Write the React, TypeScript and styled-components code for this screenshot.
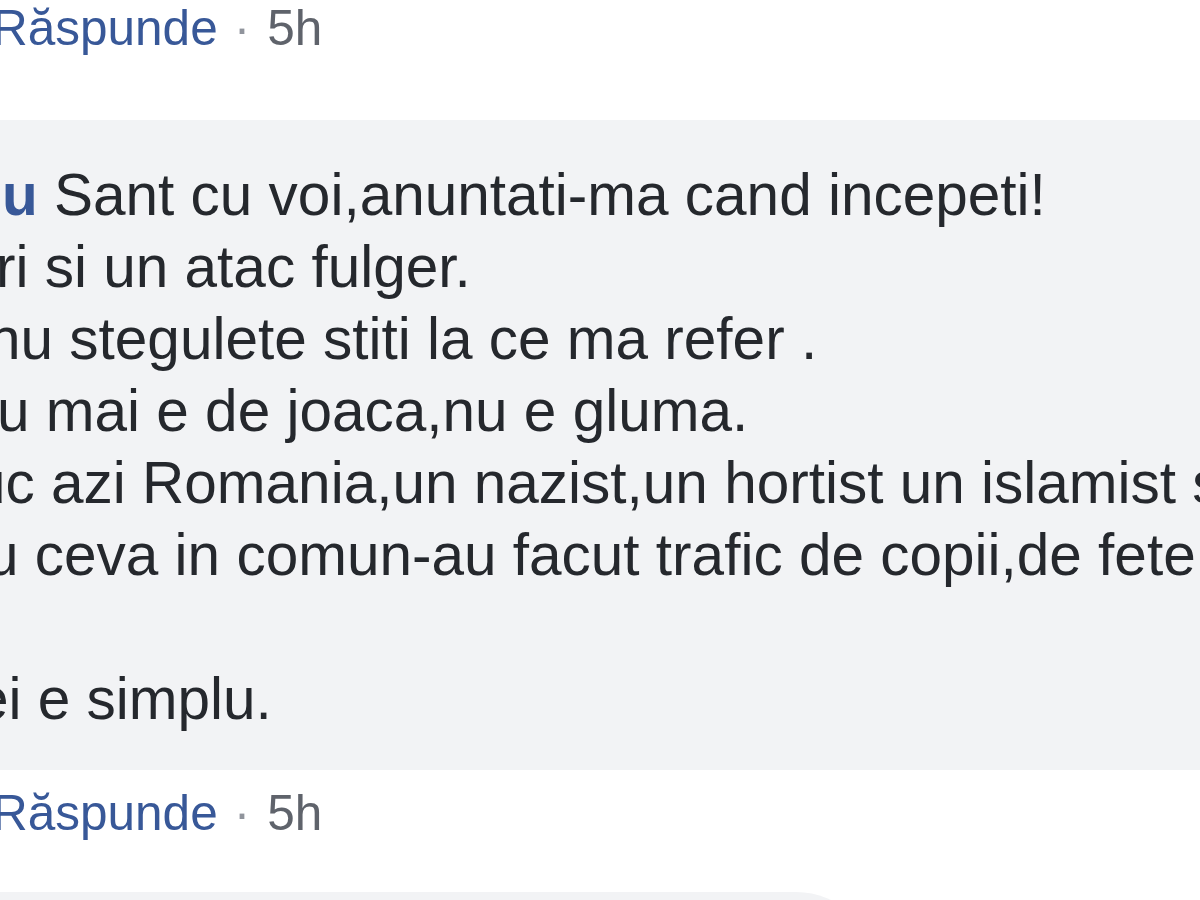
import React from "react";
import styled, { createGlobalStyle } from "styled-components";

const GlobalStyle = createGlobalStyle`
  html, body {
    margin: 0;
    padding: 0;
    background: #ffffff;
    overflow: hidden;
  }
  body {
    font-family: "Liberation Sans", Arial, sans-serif;
    -webkit-font-smoothing: antialiased;
  }
`;

const Page = styled.div`
  width: 1200px;
  height: 900px;
  overflow: hidden;
  position: relative;
`;

const Thread = styled.div`
  margin-left: -100px;
  width: 1700px;
  display: flex;
  flex-direction: column;
  align-items: flex-start;
`;

const ActionBar = styled.div<{ $top: number; $bottom: number }>`
  display: flex;
  align-items: baseline;
  padding-left: 100px;
  padding-top: ${(p) => p.$top}px;
  margin-bottom: ${(p) => p.$bottom}px;
  font-size: 49.5px;
  line-height: 54px;
  white-space: nowrap;
`;

const ActionLink = styled.span<{ $shift: number }>`
  margin-left: ${(p) => p.$shift}px;
  color: #385898;
`;

const Dot = styled.span`
  color: #90949c;
  padding: 0 17px 0 16px;
`;

const Time = styled.span`
  color: #5f636b;
`;

const Bubble = styled.div`
  width: 1500px;
  box-sizing: border-box;
  background: #f2f3f5;
  border-radius: 81px;
  padding: 39px 54px 35px 100px;
  color: #25282d;
  font-size: 58.5px;
  line-height: 72px;
`;

const Line = styled.div<{ $shift: number }>`
  margin-left: ${(p) => p.$shift}px;
  white-space: nowrap;
  min-height: 72px;
`;

const Name = styled.span`
  color: #385898;
  font-weight: 700;
`;

const NextBubble = styled.div`
  width: 977px;
  height: 200px;
  background: #f2f3f5;
  border-radius: 81px;
`;

const lines: { text: string; shift: number }[] = [
  { text: "ri si un atac fulger.", shift: -4 },
  { text: "nu stegulete stiti la ce ma refer .", shift: -12 },
  { text: "u mai e de joaca,nu e gluma.", shift: -3 },
  { text: "uc azi Romania,un nazist,un hortist un islamist si", shift: -27 },
  { text: "u ceva in comun-au facut trafic de copii,de fete", shift: -14 },
  { text: "", shift: 0 },
  { text: "ei e simplu.", shift: -24 },
];

function Actions({ top, bottom }: { top: number; bottom: number }) {
  return (
    <ActionBar $top={top} $bottom={bottom}>
      <ActionLink $shift={-8}>Răspunde</ActionLink>
      <Dot>·</Dot>
      <Time>5h</Time>
    </ActionBar>
  );
}

export default function App() {
  return (
    <>
      <GlobalStyle />
      <Page>
        <Thread>
          <Actions top={1} bottom={65} />
          <Bubble>
            <Line $shift={2}>
              <Name>u</Name> Sant cu voi,anuntati-ma cand incepeti!
            </Line>
            {lines.map((l, i) => (
              <Line key={i} $shift={l.shift}>
                {l.text}
              </Line>
            ))}
          </Bubble>
          <Actions top={16} bottom={52} />
          <NextBubble />
        </Thread>
      </Page>
    </>
  );
}
